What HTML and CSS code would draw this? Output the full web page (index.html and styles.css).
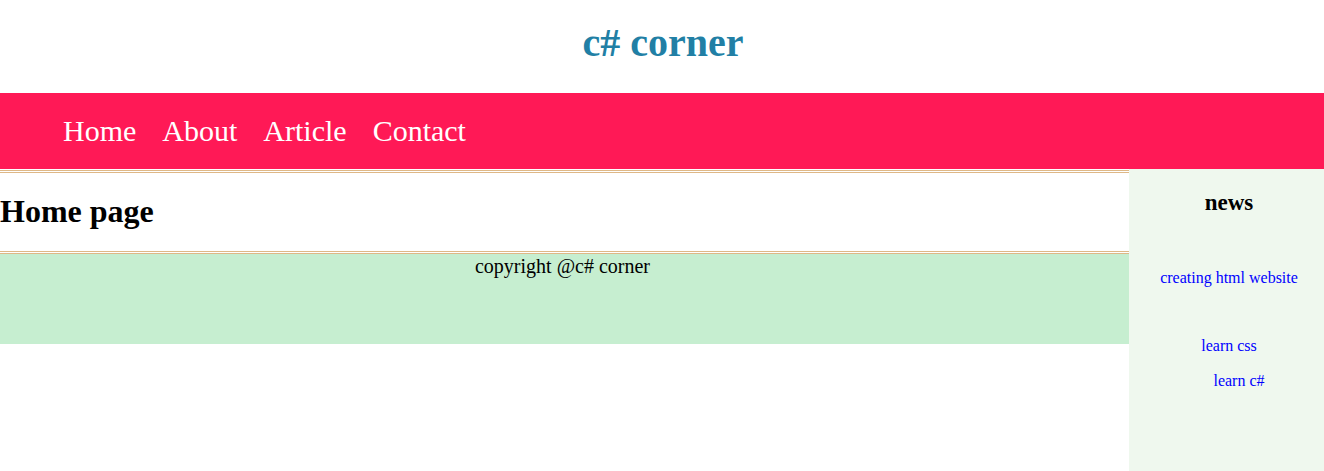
FILE: index.html
```html
<!DOCTYPE html>
<html>
<head>
<meta charset="utf-8">
<title>c# corner</title>
<link rel="stylesheet" href="styles.css">
</head>
<body>
<header class="site-header">
  <h1 class="site-title">c# corner</h1>
</header>
<nav class="main-nav">
  <a href="#">Home</a>
  <a href="#">About</a>
  <a href="#">Article</a>
  <a href="#">Contact</a>
</nav>
<div class="layout">
  <div class="main-col">
    <section class="content">
      <h1 class="page-title">Home page</h1>
    </section>
    <footer class="site-footer">copyright @c# corner</footer>
  </div>
  <aside class="sidebar">
    <h2 class="news-title">news</h2>
    <a class="news-link first" href="#">creating html website</a>
    <a class="news-link second" href="#">learn css</a>
    <a class="news-link third" href="#">learn c#</a>
  </aside>
</div>
</body>
</html>
```
FILE: styles.css
```css
html, body {
  margin: 0;
  padding: 0;
  background: #ffffff;
  font-family: "Liberation Serif", "Times New Roman", serif;
}

.site-header {
  height: 93px;
  box-sizing: border-box;
  padding-top: 20px;
  padding-left: 2px;
  text-align: center;
}

.site-title {
  margin: 0;
  font-size: 40px;
  line-height: 46px;
  font-weight: bold;
  color: #217fa5;
}

.main-nav {
  height: 76px;
  box-sizing: border-box;
  background: #ff1956;
  padding: 21px 0 0 63px;
  display: flex;
  gap: 26px;
}

.main-nav a {
  color: #ffffff;
  text-decoration: none;
  font-size: 30px;
  line-height: 34px;
}

.layout {
  display: flex;
  align-items: flex-start;
}

.main-col {
  flex: 1;
  padding-top: 1px;
}

.content {
  border-top: 3px double #deb887;
  border-bottom: 3px double #deb887;
  padding: 20px 0 21px;
}

.page-title {
  margin: 0;
  font-size: 32px;
  line-height: 37px;
  font-weight: bold;
  color: #000000;
}

.site-footer {
  height: 90px;
  box-sizing: border-box;
  background: #c6eed0;
  text-align: center;
  font-size: 20px;
  line-height: 23px;
  padding: 1px 4px 0 0;
  color: #000000;
}

.sidebar {
  width: 195px;
  min-height: 302px;
  box-sizing: border-box;
  background: #eff8ee;
  padding: 20px 0 0 5px;
  display: flex;
  flex-direction: column;
  align-items: center;
}

.news-title {
  margin: 0;
  font-size: 23px;
  line-height: 27px;
  font-weight: bold;
  color: #000000;
}

.news-link {
  color: #0000ff;
  text-decoration: none;
  font-size: 16px;
  line-height: 18px;
}

.news-link.first {
  margin-top: 53px;
}

.news-link.second {
  margin-top: 50px;
}

.news-link.third {
  margin-top: 17px;
  padding-left: 20px;
}
```
